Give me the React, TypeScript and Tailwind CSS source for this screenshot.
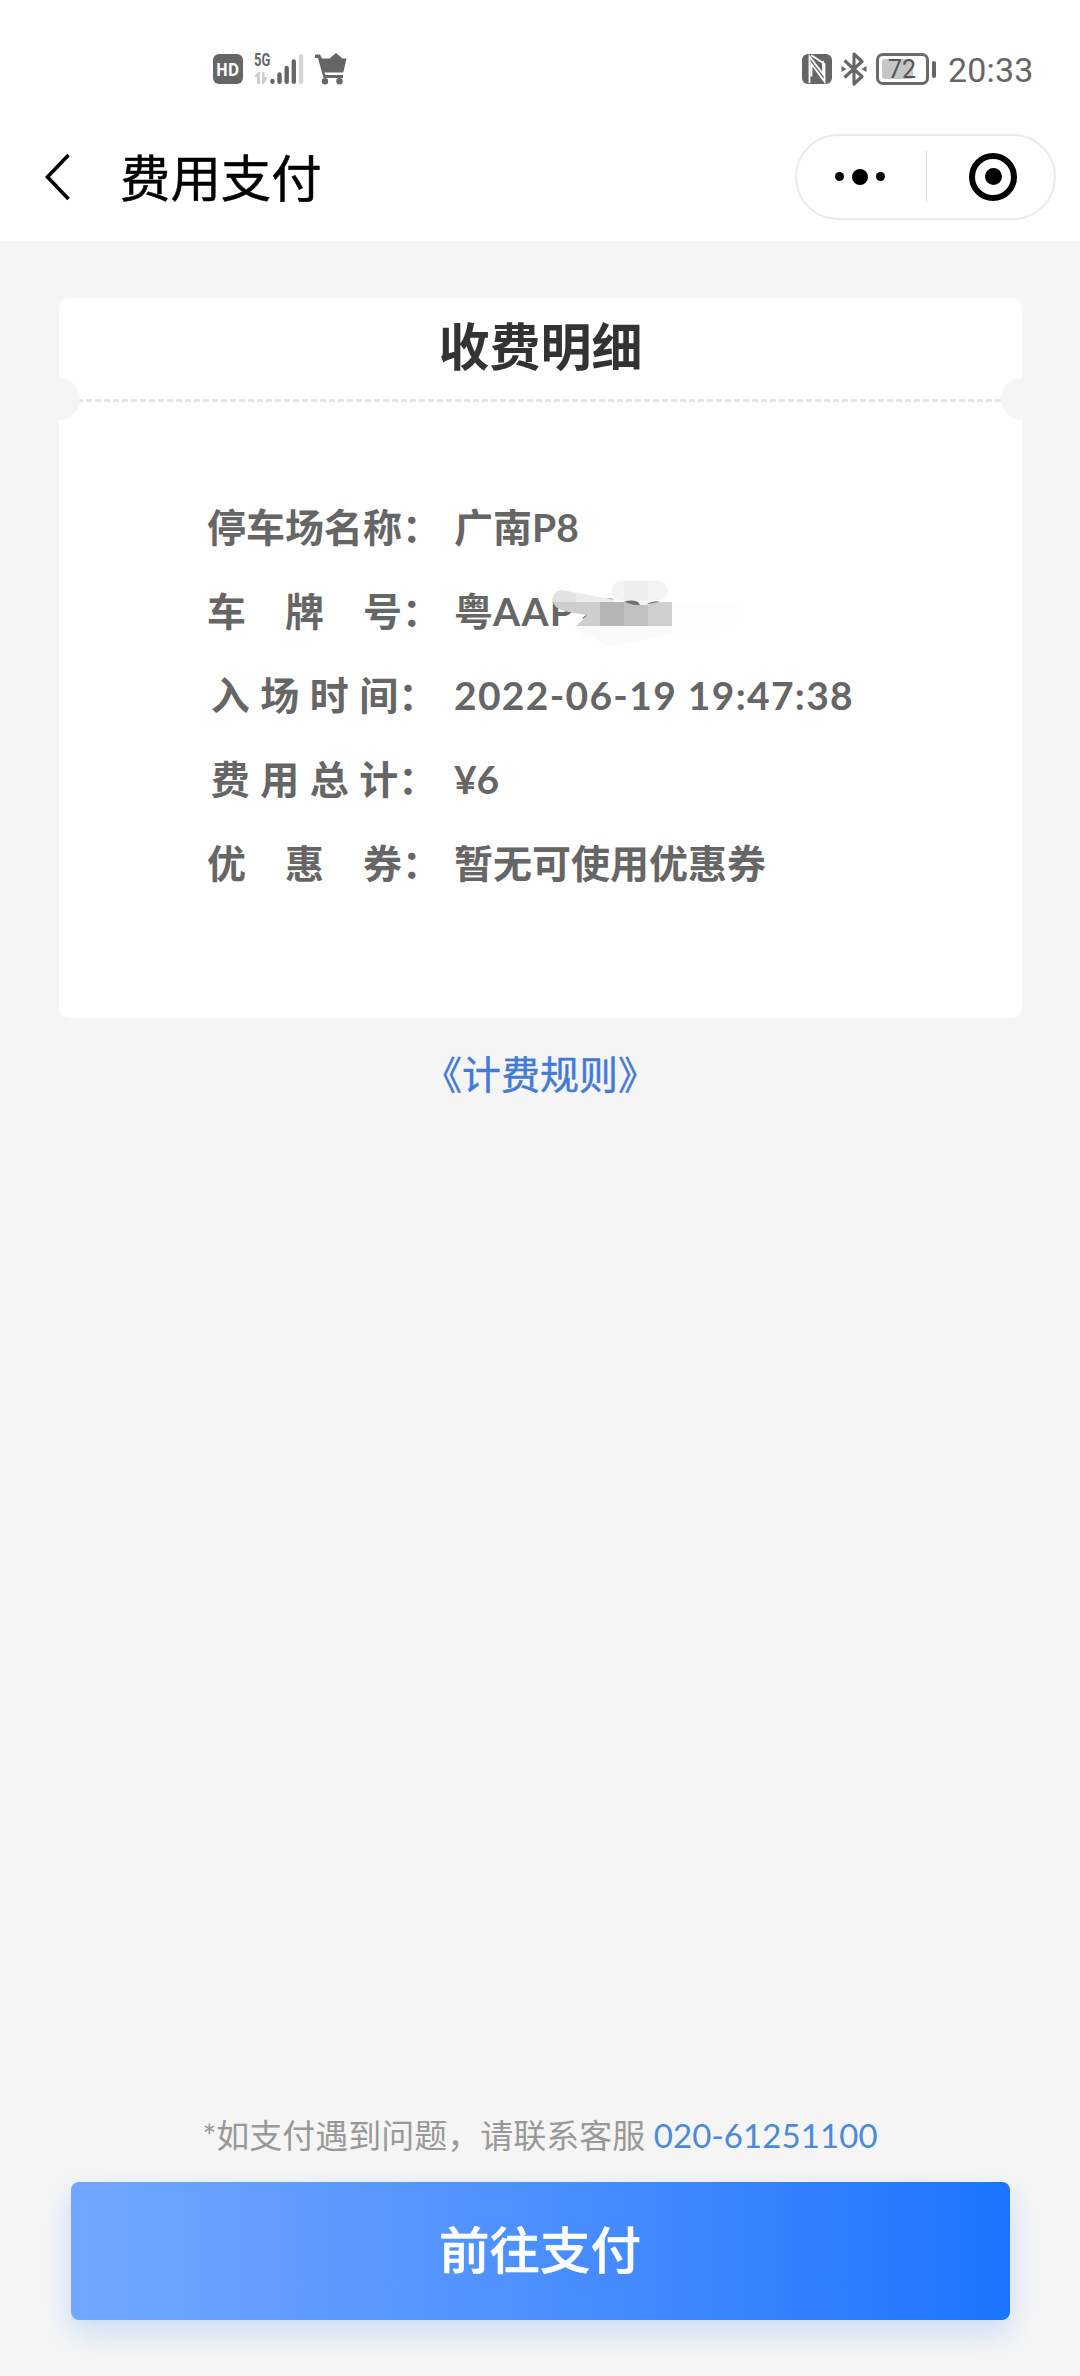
import type { ReactNode } from "react";

const rows: { label: string; value: ReactNode }[] = [
  { label: "停车场名称：", value: "广南P8" },
  { label: "车　牌　号：", value: <PlateNumber /> },
  { label: "入 场 时 间：", value: <span className="tracking-[1.3px]">2022-06-19 19:47:38</span> },
  { label: "费 用 总 计：", value: "¥6" },
  { label: "优　惠　券：", value: "暂无可使用优惠券" },
];

// plate number with its tail smudged out
function PlateNumber() {
  return (
    <span className="relative">
      粤<span className="tracking-[1.3px]">AAP</span>
      <svg className="absolute -top-[26px] left-[66px] h-[90px] w-[240px]" viewBox="0 0 720 270">
        <path d="M165 192 H456 V215 Q420 215 380 232 L275 252 Q240 245 220 225 Q170 215 165 192Z" fill="#fafafa" />
        <path d="M456 120 H650 V190 H600 V212 H456Z" fill="#fdfdfd" />
        <path d="M100 120 V125 Q110 143 150 151 L202 160 L168 192 H240 V120Z" fill="#cecece" />
        <path d="M187 167 L198 160 L203 160 L190 170Z" fill="#777" />
        <rect x="240" y="120" width="72" height="72" fill="#b5b5b5" />
        <rect x="312" y="120" width="72" height="72" fill="#c1c1c1" />
        <rect x="384" y="120" width="72" height="72" fill="#cfcfcf" />
        <path d="M98 120 Q96 88 126 84 L168 92 L278 113 L282 120Z" fill="#e2e2e2" />
        <path d="M168 92 L278 113 L284 120 H168Z" fill="#ececec" />
        <path d="M258 108 L275 109 L284 115Z" fill="#aaa" />
        <rect x="275" y="56" width="168" height="60" rx="30" fill="#f3f3f3" />
        <rect x="312" y="56" width="72" height="60" fill="#eeeeee" />
        <path d="M312 119 Q335 112 355 120 L360 130 L340 128Z" fill="#707070" />
        <path d="M355 120 H400 L378 130 L360 128Z" fill="#f2f2f2" />
        <path d="M380 127 Q398 115 420 119 L402 123Z" fill="#777" />
      </svg>
    </span>
  );
}

function CartIcon() {
  return (
    <svg className="h-8 w-[33px]" viewBox="0 0 33 32" fill="#666">
      <path d="M1 1.5h5l2 4h24.5l-3.2 14H10.5l1 2.5H29v3H9.5L4 5H1z" />
      <path d="M15 6L22 0l7 6z" />
      <circle cx="11" cy="28.3" r="3.2" />
      <circle cx="25.5" cy="28.3" r="3.2" />
    </svg>
  );
}

function SignalIcon() {
  return (
    <div className="relative h-[32px] w-[50px]">
      <span className="absolute -top-[1px] left-0 origin-left scale-x-[.68] font-['Roboto'] text-[19px] leading-[16px] font-bold text-[#666]">
        5G
      </span>
      <svg className="h-[32px] w-[50px]" viewBox="0 0 50 32" strokeLinecap="round">
        <g fill="#cfcfcf">
          <path d="M0 24l4-5h2v12H3v-7z" />
          <path d="M8 19h2.500v5h3.500l-4 7H8z" />
        </g>
        <g stroke="#666" strokeWidth="4.4">
          <path d="M18.500 28v.8M25.500 21.500v7.300M32.700 15v13.800M39.800 8.500v20.300" />
        </g>
        <path d="M47 3.500v25.300" stroke="#d4d4d4" strokeWidth="4.4" />
      </svg>
    </div>
  );
}

function NfcIcon() {
  return (
    <svg className="h-[30px] w-[30px]" viewBox="0 0 30 30">
      <rect width="30" height="30" rx="6" fill="#666" />
      <path d="M7.500 29V2.500L21 20V7M9 1L22.500 10V27.500L9.500 10V22.500" fill="none" stroke="#fff" strokeWidth="1.8" />
    </svg>
  );
}

function BluetoothIcon() {
  return (
    <svg className="h-[34px] w-[26px]" viewBox="0 0 26 34" fill="none" stroke="#666" strokeWidth="3.1" strokeLinejoin="round">
      <path d="M3.500 8.500L21 24.500L13 32V2L21 9.500L3.500 25.500" />
      <path d="M0.500 14l5 3L0.500 20zM25.500 14l-5 3l5 3z" fill="#666" stroke="none" />
    </svg>
  );
}

function Battery() {
  return (
    <div className="flex items-center gap-[3px]">
      <div className="flex h-[32px] w-[53px] rounded-[7px] border-[3px] border-[#6a6a6a] p-[3px]">
        <div className="relative h-full w-[31px] rounded-[3px] bg-[#c6c6c6]">
          <span className="absolute top-[-1px] left-[6px] font-['Roboto'] text-[25px] leading-[23px] text-[#555]">
            72
          </span>
        </div>
      </div>
      <div className="h-[17px] w-1 rounded-full bg-[#666]" />
    </div>
  );
}

function StatusBar() {
  return (
    <div className="flex h-28 items-center justify-between pt-[26px] pr-[46px] pl-[213px]">
      <div className="flex items-center">
        <div className="flex h-[30px] w-[30px] items-center justify-center rounded-[6px] bg-[#666] font-['Open_Sans'] text-[18px] font-bold text-white">
          <span className="scale-x-[.86]">HD</span>
        </div>
        <div className="ml-[11px]">
          <SignalIcon />
        </div>
        <div className="ml-[10px]">
          <CartIcon />
        </div>
      </div>
      <div className="flex items-center">
        <NfcIcon />
        <div className="ml-[9px]">
          <BluetoothIcon />
        </div>
        <div className="ml-[9px]">
          <Battery />
        </div>
        <span className="ml-[12px] w-[86px] pt-px font-['Roboto'] text-[34px] leading-none tracking-[0.2px] whitespace-nowrap text-[#666]">
          20:33
        </span>
      </div>
    </div>
  );
}

function NavBar() {
  return (
    <div className="flex h-[129px] items-center pr-6 pl-[44px]">
      <svg className="h-[48px] w-7" viewBox="0 0 28 48" fill="none" stroke="#000" strokeWidth="3.6">
        <path d="M24.500 2L3.500 24L24.500 46" />
      </svg>
      <h1 className="ml-[48px] pt-[3px] text-[50.4px] leading-none text-black [-webkit-text-stroke:0.5px_#000]">
        费用支付
      </h1>
      <div className="ml-auto flex h-[86px] w-[261px] items-center rounded-full border-2 border-[#ebebeb]">
        <div className="flex w-[129px] items-center justify-center gap-2 pr-[3px]">
          <i className="h-[9px] w-[9px] rounded-full bg-black" />
          <i className="h-4 w-4 rounded-full bg-black" />
          <i className="h-[9px] w-[9px] rounded-full bg-black" />
        </div>
        <div className="h-[51px] w-px bg-[#dcdcdc]" />
        <div className="flex flex-1 items-center justify-center pl-[5px]">
          <div className="flex h-12 w-12 items-center justify-center rounded-full border-[6px] border-black">
            <i className="h-[17px] w-[17px] rounded-full bg-black" />
          </div>
        </div>
      </div>
    </div>
  );
}

export default function App() {
  return (
    <div className="flex h-[2376px] w-[1080px] flex-col bg-[#f5f5f5] font-['Lato','Noto_Sans_CJK_SC',sans-serif]">
      <header className="bg-white">
        <StatusBar />
        <NavBar />
      </header>

      <section className="relative mt-[57px] ml-[59px] h-[720px] w-[963px] overflow-hidden rounded-[10px] bg-white">
        <div className="flex h-[101px] items-center justify-center pb-[3px] text-[51px] font-bold text-[#333]">
          收费明细
        </div>
        <div className="h-[3px] bg-[repeating-linear-gradient(90deg,#e5e5e5_0_6px,transparent_6px_9px)]" />
        <div className="absolute top-[80px] -left-[21px] h-[42px] w-[42px] rounded-full bg-[#f5f5f5]" />
        <div className="absolute top-[80px] -right-[21px] h-[42px] w-[42px] rounded-full bg-[#f5f5f5]" />

        <dl className="mt-[83px] ml-[148px] text-[39px] leading-[84px] font-bold whitespace-pre text-[#666]">
          {rows.map((row) => (
            <div key={row.label} className="flex h-[84px]">
              <dt className="w-[234px] text-center [word-spacing:1px]">{row.label}</dt>
              <dd className="ml-[13px]">{row.value}</dd>
            </div>
          ))}
        </dl>
      </section>

      <a className="mt-[27px] text-center text-[39px] leading-[58px] text-[#437ad6] [-webkit-text-stroke:0.4px_#437ad6]">
        《计费规则》
      </a>

      <footer className="mt-auto mb-[56px] flex flex-col items-center">
        <p className="text-[33px] leading-[48px] whitespace-pre text-[#999]">
          *如支付遇到问题，请联系客服 <span className="tracking-[0.1px] text-[#4a8ad8]">020-61251100</span>
        </p>
        <button className="mt-[23px] h-[138px] w-[939px] rounded-[8px] bg-linear-to-r from-[#72a7ff] to-[#1a74ff] pb-[3px] text-[50.5px] font-medium text-white shadow-[0_12px_30px_rgba(26,116,255,0.2)] [-webkit-text-stroke:0.5px_#fff]">
          前往支付
        </button>
      </footer>
    </div>
  );
}
